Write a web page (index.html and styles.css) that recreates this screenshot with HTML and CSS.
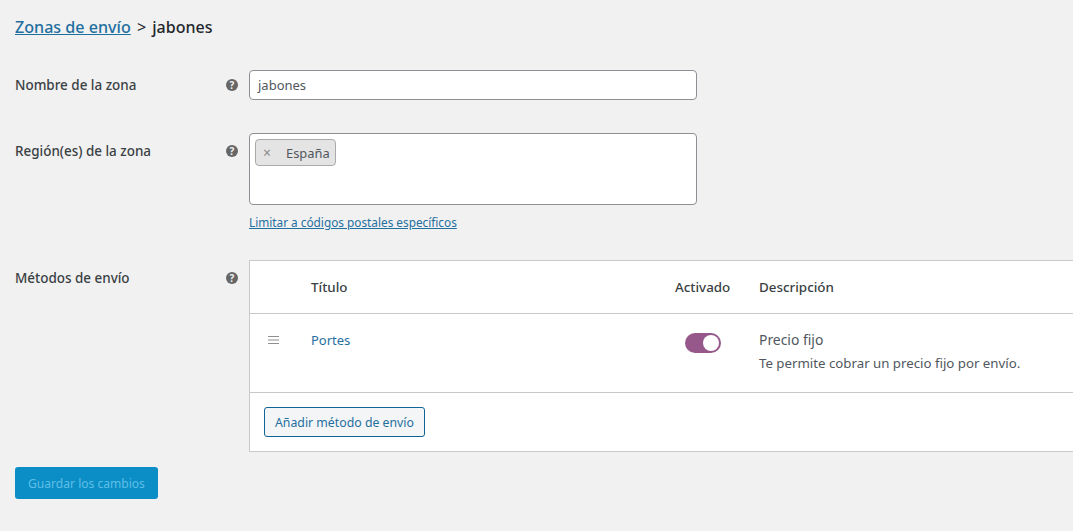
FILE: index.html
```html
<!DOCTYPE html>
<html lang="es">
<head>
<meta charset="utf-8">
<title>Zonas de envío</title>
<link rel="stylesheet" href="styles.css">
</head>
<body>
<h2 class="crumb"><a href="#" class="crumb-link">Zonas de envío</a> <span class="crumb-sep">&gt;</span> <span>jabones</span></h2>
<div class="row row-name">
  <div class="label">Nombre de la zona</div>
  <div class="help"><span class="help-icon">?</span></div>
  <div class="field"><div class="input">jabones</div></div>
</div>
<div class="row row-region">
  <div class="label">Región(es) de la zona</div>
  <div class="help"><span class="help-icon">?</span></div>
  <div class="field">
    <div class="select"><span class="tag"><span class="tag-x">×</span><span>España</span></span></div>
    <a href="#" class="limit">Limitar a códigos postales específicos</a>
  </div>
</div>
<div class="row row-methods">
  <div class="label">Métodos de envío</div>
  <div class="help"><span class="help-icon">?</span></div>
  <div class="panel">
    <div class="tr thead">
      <div class="c-drag"></div>
      <div class="c-title">Título</div>
      <div class="c-on">Activado</div>
      <div class="c-desc">Descripción</div>
    </div>
    <div class="tr tbody">
      <div class="c-drag"><svg class="drag" viewBox="0 0 11 8"><path d="M0 .5h11M0 4h11M0 7.500h11" stroke="#8f8f8f" stroke-width="1"/></svg></div>
      <div class="c-title"><a href="#" class="method">Portes</a></div>
      <div class="c-on"><span class="toggle"><span class="knob"></span></span></div>
      <div class="c-desc"><div class="desc-title">Precio fijo</div><div class="desc-text">Te permite cobrar un precio fijo por envío.</div></div>
    </div>
    <div class="tfoot"><a href="#" class="btn-add">Añadir método de envío</a></div>
  </div>
</div>
<div class="save-row"><span class="btn-save">Guardar los cambios</span></div>
</body>
</html>
```
FILE: styles.css
```css
html, body { margin: 0; height: 100%; overflow: hidden; }
body { background: #f1f1f1; color: #3c434a; font: 13px/20px "Noto Sans", "Open Sans", sans-serif; padding: 0 0 0 15px; box-sizing: border-box; width: 1073px; }
a { color: #1f6f9f; }
.crumb { margin: 0; padding-top: 15px; font-size: 16px; line-height: 24px; font-weight: 500; color: #23282d; height: 24px; }
.crumb-link { color: #1f6f9f; font-size: 16.1px; }
.crumb-sep { font-weight: 400; padding: 0 2px; }
.row { display: flex; align-items: flex-start; }
.row-name { margin-top: 31px; }
.row-region { margin-top: 33px; }
.row-methods { margin-top: 28px; }
.label { width: 211px; font-size: 13.45px; font-weight: 500; color: #3a3f44; flex: none; margin-top: 8px; }
.help { width: 23px; flex: none; height: 20px; display: flex; align-items: center; margin-top: 8px; }
.help-icon { display: block; width: 12px; height: 12px; border-radius: 50%; background: #666; color: #f1f1f1; font-size: 10px; font-weight: 700; line-height: 12px; text-align: center; }
.field { width: 448px; flex: none; }
.input { box-sizing: border-box; height: 30px; background: #fff; border: 1px solid #8c8f94; border-radius: 4px; padding: 4px 8px; color: #50575e; }
.row-name .label, .row-name .help { margin-top: 5px; }
.select { box-sizing: border-box; height: 72px; background: #fff; border: 1px solid #8c8f94; border-radius: 4px; padding: 5px; }
.tag { display: inline-flex; box-sizing: border-box; height: 27px; align-items: center; background: #e4e4e4; border: 1px solid #aaa; border-radius: 4px; padding: 0 5px 0 7px; color: #50575e; font-size: 12.9px; }
.tag-x { color: #8a8a8a; width: 23px; font-size: 14px; flex: none; }
.limit { display: block; margin-top: 7px; font-size: 11.8px; line-height: 20px; color: #1f6f9f; }
.panel { flex: 1; min-width: 0; box-sizing: border-box; background: #fff; border: 1px solid #c9c9c9; border-right: 0; height: 192px; }
.tr { display: flex; }
.thead { height: 52px; align-items: center; border-bottom: 1px solid #c9c9c9; font-size: 13.4px; font-weight: 500; color: #3a3f44; }
.tbody { height: 79px; border-bottom: 1px solid #c9c9c9; padding-top: 16px; box-sizing: border-box; }
.c-drag { width: 61px; flex: none; }
.c-title { width: 364px; flex: none; }
.c-on { width: 84px; flex: none; }
.c-desc { flex: 1; }
.drag { display: block; width: 11px; height: 8px; margin: 6px 0 0 18px; }
.method { text-decoration: none; color: #1f6f9f; }
.toggle { display: block; box-sizing: border-box; width: 36px; height: 20px; margin: 3px 0 0 10px; background: #96588a; border-radius: 10px; padding: 2px; }
.knob { display: block; width: 16px; height: 16px; border-radius: 50%; background: #fff; margin-left: 16px; }
.desc-title { font-size: 13.9px; color: #50575e; }
.desc-text { margin-top: 3px; font-size: 13.25px; color: #50575e; }
.tfoot { padding: 14px; }
.btn-add { display: inline-block; box-sizing: border-box; height: 30px; line-height: 30px; padding: 0 10px; font-size: 12.3px; background: #f3f5f6; border: 1px solid #0f6596; border-radius: 3px; color: #1f6f9f; text-decoration: none; }
.save-row { margin-top: 15px; }
.btn-save { display: inline-block; box-sizing: border-box; width: 143px; height: 32px; line-height: 34px; text-align: center; font-size: 12.07px; background: #0b8ec6; border-radius: 3px; color: #5fbfe6; }
```
